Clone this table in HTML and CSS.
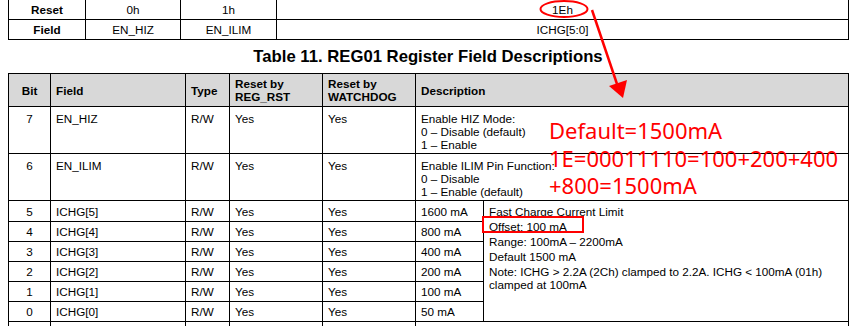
FILE: index.html
```html
<!DOCTYPE html>
<html>
<head>
<meta charset="utf-8">
<title>REG01 Register Field Descriptions</title>
<link rel="stylesheet" href="styles.css">
</head>
<body>
<div class="page">
  <table class="bits">
    <colgroup><col class="c-label"><col class="c-b7"><col class="c-b6"><col class="c-rest"></colgroup>
    <tr><th>Reset</th><td>0h</td><td>1h</td><td>1Eh</td></tr>
    <tr><th>Field</th><td>EN_HIZ</td><td>EN_ILIM</td><td>ICHG[5:0]</td></tr>
  </table>

  <h2 class="title">Table 11. REG01 Register Field Descriptions</h2>

  <table class="fields">
    <colgroup>
      <col class="f-bit"><col class="f-field"><col class="f-type"><col class="f-rr"><col class="f-rw"><col class="f-val"><col class="f-desc">
    </colgroup>
    <tr class="head">
      <th class="center">Bit</th>
      <th>Field</th>
      <th>Type</th>
      <th>Reset by<br>REG_RST</th>
      <th>Reset by<br>WATCHDOG</th>
      <th colspan="2">Description</th>
    </tr>
    <tr class="tall">
      <td class="center">7</td><td>EN_HIZ</td><td>R/W</td><td>Yes</td><td>Yes</td>
      <td colspan="2">Enable HIZ Mode:<br>0 – Disable (default)<br>1 – Enable</td>
    </tr>
    <tr class="tall">
      <td class="center">6</td><td>EN_ILIM</td><td>R/W</td><td>Yes</td><td>Yes</td>
      <td colspan="2">Enable ILIM Pin Function:<br>0 – Disable<br>1 – Enable (default)</td>
    </tr>
    <tr class="short first">
      <td class="center">5</td><td>ICHG[5]</td><td>R/W</td><td>Yes</td><td>Yes</td><td>1600 mA</td>
      <td rowspan="6" class="limit">
        <div class="ln">Fast Charge Current Limit</div>
        <div class="ln">Offset: 100 mA</div>
        <div class="ln">Range: 100mA – 2200mA</div>
        <div class="ln">Default 1500 mA</div>
        <div class="note-ln">Note: ICHG &gt; 2.2A (2Ch) clamped to 2.2A. ICHG &lt; 100mA (01h) clamped at 100mA</div>
      </td>
    </tr>
    <tr class="short"><td class="center">4</td><td>ICHG[4]</td><td>R/W</td><td>Yes</td><td>Yes</td><td>800 mA</td></tr>
    <tr class="short"><td class="center">3</td><td>ICHG[3]</td><td>R/W</td><td>Yes</td><td>Yes</td><td>400 mA</td></tr>
    <tr class="short"><td class="center">2</td><td>ICHG[2]</td><td>R/W</td><td>Yes</td><td>Yes</td><td>200 mA</td></tr>
    <tr class="short"><td class="center">1</td><td>ICHG[1]</td><td>R/W</td><td>Yes</td><td>Yes</td><td>100 mA</td></tr>
    <tr class="short"><td class="center">0</td><td>ICHG[0]</td><td>R/W</td><td>Yes</td><td>Yes</td><td>50 mA</td></tr>
    <tr class="short"><td></td><td></td><td></td><td></td><td></td><td colspan="2"></td></tr>
  </table>
</div>

<svg class="marks" width="860" height="326" viewBox="0 0 860 326" xmlns="http://www.w3.org/2000/svg">
  <ellipse cx="564" cy="9" rx="23.5" ry="8" fill="none" stroke="#f00" stroke-width="2"/>
  <line x1="592" y1="10" x2="617" y2="84" stroke="#f00" stroke-width="2.5"/>
  <polygon points="623,98 609,86 627,80" fill="#f00"/>
  <rect x="483" y="217" width="100" height="15" fill="none" stroke="#f00" stroke-width="2"/>
</svg>

<div class="annot">Default=1500mA<br>1E=00011110=100+200+400<br>+800=1500mA</div>
</body>
</html>
```

FILE: styles.css
```css
html, body {
  margin: 0;
  padding: 0;
  background: #fff;
}

body {
  width: 860px;
  height: 326px;
  overflow: hidden;
  position: relative;
  font-family: "Liberation Sans", Arial, sans-serif;
  font-size: 11.7px;
  color: #000;
}

.page {
  padding-left: 8px;
  width: 840px;
}

table {
  border-collapse: collapse;
  table-layout: fixed;
  width: 840px;
}

th, td {
  border: 1px solid #000;
  padding: 0 5px;
  line-height: 13px;
}

/* top bit table */
.bits {
  margin-top: -1px;
}
.bits tr { height: 20px; }
.bits th, .bits td {
  text-align: center;
  vertical-align: middle;
}
.bits th { font-weight: bold; }
.c-label { width: 77px; }
.c-b7 { width: 95px; }
.c-b6 { width: 96px; }
.c-rest { width: 572px; }

.title {
  margin: 0;
  height: 33px;
  line-height: 33px;
  font-size: 16.7px;
  font-weight: bold;
  text-align: center;
}

/* field description table */
.f-bit { width: 42px; }
.f-field { width: 135px; }
.f-type { width: 44px; }
.f-rr { width: 93px; }
.f-rw { width: 93px; }
.f-val { width: 68px; }
.f-desc { width: 365px; }

.fields th {
  background: #d8d8d8;
  font-weight: bold;
  text-align: left;
  vertical-align: middle;
}
.fields .head { height: 33px; }
.fields td {
  text-align: left;
  vertical-align: top;
}
.fields .tall { height: 47px; }
.fields .tall td { padding-top: 5px; }
.fields .short { height: 20px; }
.fields .short.first { height: 21px; }
.fields .short td { vertical-align: middle; }
.fields .short td.limit {
  vertical-align: top;
  padding-top: 3px;
}
.fields .center,
.fields th.center { text-align: center; }

.ln { line-height: 15px; }
.note-ln { line-height: 13px; margin-top: 1px; }

/* annotation overlay */
.marks {
  position: absolute;
  left: 0;
  top: 0;
  pointer-events: none;
}

.annot {
  position: absolute;
  left: 549px;
  top: 117px;
  font-family: "Noto Sans", "Noto Sans CJK SC", sans-serif;
  font-size: 22px;
  line-height: 27.5px;
  color: #f00;
  white-space: nowrap;
}
```
